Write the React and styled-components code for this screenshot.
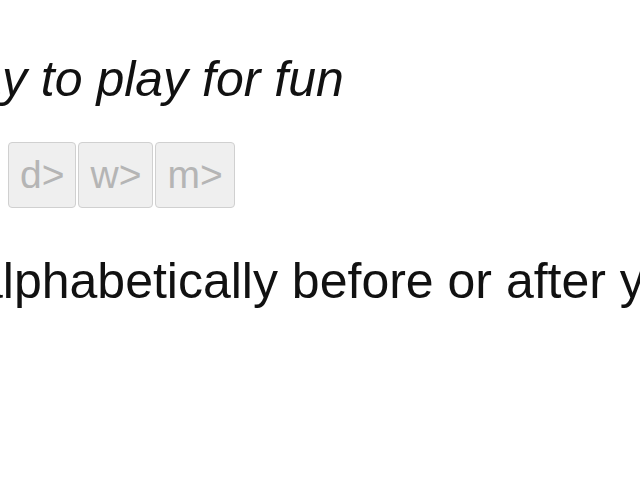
import React from 'react';
import styled, { createGlobalStyle } from 'styled-components';

const GlobalStyle = createGlobalStyle`
    html, body {
        margin: 0;
        padding: 0;
        background: #ffffff;
        overflow: hidden;
    }
`;

const Page = styled.div`
    width: 640px;
    height: 480px;
    overflow: hidden;
    display: flex;
    flex-direction: column;
    font-family: "Liberation Sans", Arial, sans-serif;
    color: #111111;
`;

const Tagline = styled.p`
    margin: 51px 0 0 -62px;
    font-size: 50px;
    font-style: italic;
    line-height: 57px;
    white-space: nowrap;
`;

const ButtonRow = styled.div`
    display: flex;
    flex-direction: row;
    gap: 2px;
    margin: 34px 0 0 8px;
`;

const StepButton = styled.button`
    font-family: "Liberation Sans", Arial, sans-serif;
    font-size: 39px;
    line-height: 44px;
    padding: 10px 11px;
    color: #b5b5b5;
    background: #efefef;
    border: 1px solid #d0d0d0;
    border-radius: 4px;
    cursor: default;
`;

const Hint = styled.p`
    margin: 45px 0 0 -25px;
    font-size: 50px;
    line-height: 57px;
    white-space: nowrap;
`;

const App = () => {
    const steps = ['d>', 'w>', 'm>'];

    return (
        <Page>
            <GlobalStyle />
            <Tagline>way to play for fun</Tagline>
            <ButtonRow>
                {steps.map(step => (
                    <StepButton key={step} disabled>{step}</StepButton>
                ))}
            </ButtonRow>
            <Hint>alphabetically before or after your guess</Hint>
        </Page>
    );
};

export default App;
